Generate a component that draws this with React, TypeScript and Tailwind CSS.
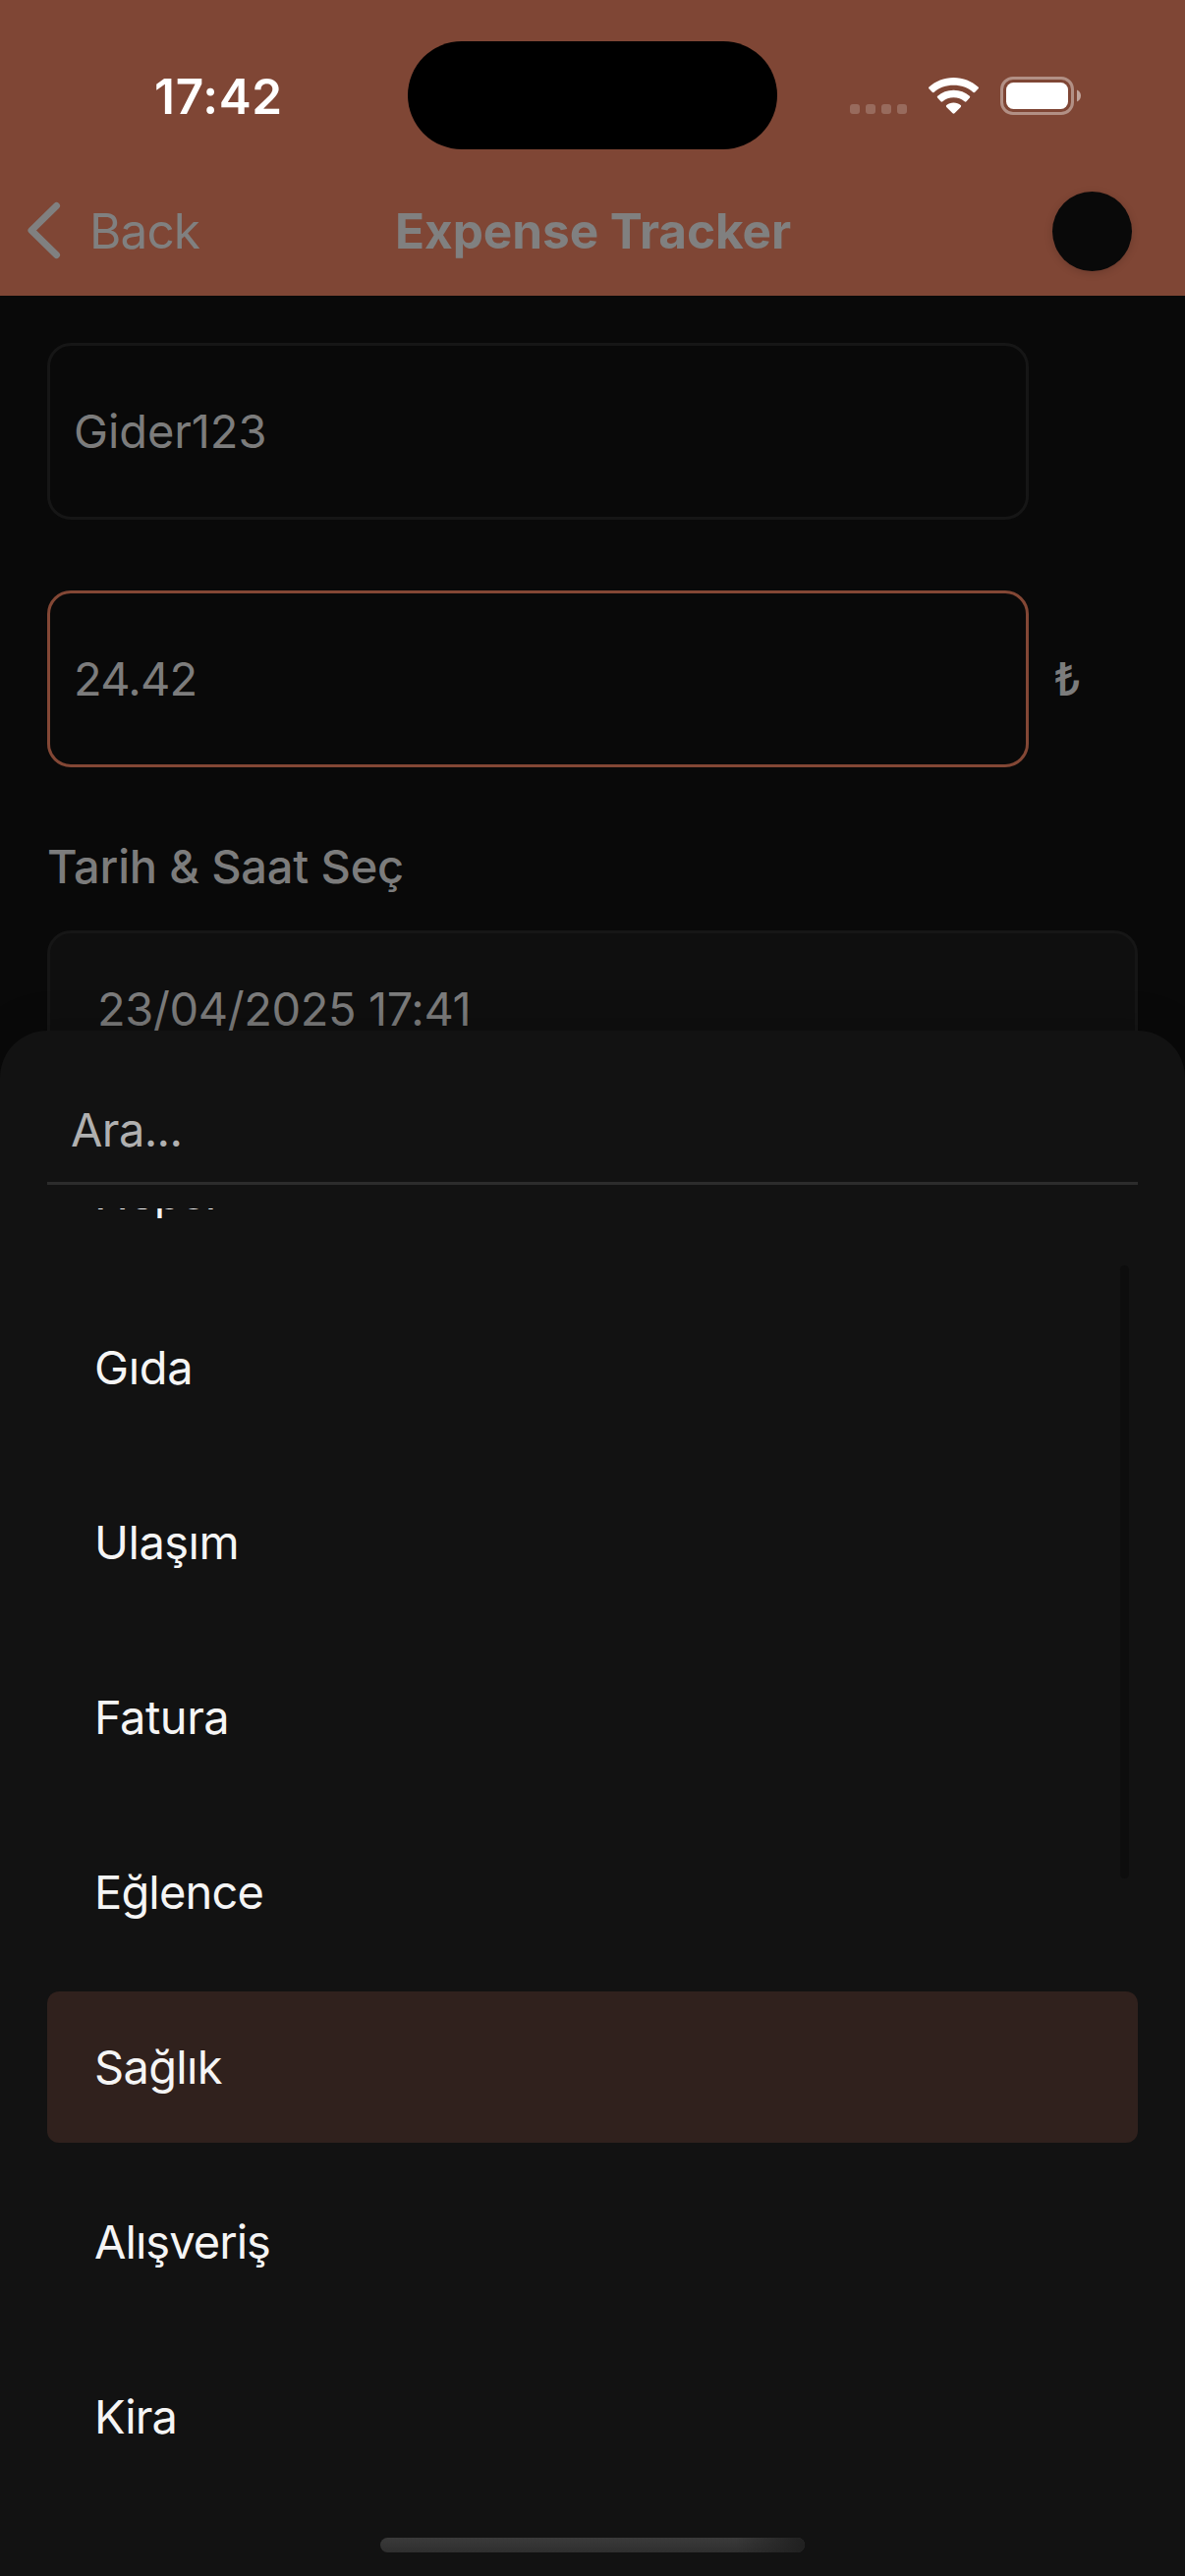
const categories = [
  { name: "Hepsi", tracking: "tracking-[-0.8px]" },
  { name: "Gıda", tracking: "tracking-[-0.3px]" },
  { name: "Ulaşım", tracking: "tracking-[-0.49px]" },
  { name: "Fatura", tracking: "tracking-[-0.5px]" },
  { name: "Eğlence", tracking: "tracking-[-0.85px]" },
  { name: "Sağlık", tracking: "tracking-[-0.7px]" },
  { name: "Alışveriş", tracking: "tracking-[-0.95px]" },
  { name: "Kira", tracking: "tracking-[-1px]" },
];

const selected = "Sağlık";

function WifiIcon() {
  return (
    <svg className="ml-[22px] h-[38px] w-[51px]" viewBox="0 0 51 38" fill="white">
      <path d="M25.5 1C35.2 1 44 4.600 50.500 10.500c.6.6.6 1.200.1 1.800l-3.300 3.500c-.5.6-1.300.6-1.800.1C40.200 11.200 33.200 8.700 25.500 8.700S10.800 11.200 5.500 15.900c-.5.5-1.300.5-1.800-.1L.4 12.300c-.5-.6-.5-1.200.1-1.800C7 4.600 15.800 1 25.500 1Z" />
      <path d="M25.500 13.800c6.300 0 12 2.200 16.300 6 .6.5.6 1.200.1 1.800l-3.400 3.600c-.5.6-1.300.6-1.900.1-3-2.500-6.800-4-11.100-4s-8.100 1.500-11.100 4c-.6.5-1.400.5-1.900-.1l-3.400-3.600c-.5-.6-.5-1.300.1-1.800 4.300-3.800 10-6 16.300-6Z" />
      <path d="M25.500 26.600c2.900 0 5.300.9 7.200 2.500.6.5.6 1.200.1 1.800l-6.300 6.400c-.6.6-1.400.6-2 0l-6.300-6.400c-.5-.6-.5-1.300.1-1.800 1.900-1.600 4.300-2.500 7.200-2.500Z" />
    </svg>
  );
}

function StatusBar() {
  return (
    <div className="flex h-[180px] items-start">
      <div className="w-[415px] pt-[68px] pl-[157px] text-[49.5px] leading-[60px] font-semibold tracking-[0.7px] text-white">
        17:42
      </div>
      <div className="mt-[42px] h-[110px] w-[376px] rounded-[55px] bg-black" />
      <div className="mt-[78px] ml-[74px] flex">
        <div className="mt-[28px] flex gap-[6px]">
          <div className="size-[10px] rounded-[3px] bg-white/20" />
          <div className="size-[10px] rounded-[3px] bg-white/20" />
          <div className="size-[10px] rounded-[3px] bg-white/20" />
          <div className="size-[10px] rounded-[3px] bg-white/20" />
        </div>
        <WifiIcon />
        <svg className="ml-[22px] h-[39px] w-[82px]" viewBox="0 0 82 39">
          <rect x="1.500" y="1.500" width="72" height="36" rx="11.500" fill="none" stroke="white" strokeOpacity="0.4" strokeWidth="3" />
          <rect x="6" y="6" width="63" height="27" rx="7.500" fill="white" />
          <path d="M78 13.500c2.400 1 4 3.200 4 6s-1.600 5-4 6Z" fill="white" fillOpacity="0.5" />
        </svg>
      </div>
    </div>
  );
}

function Header() {
  return (
    <header className="h-[301px] bg-[#7f4635]">
      <StatusBar />
      <div className="flex h-[110px] items-center text-[49.5px] leading-[60px] text-[#808080]">
        <svg className="ml-[27px] h-[60px] w-[36px]" viewBox="0 0 36 60" fill="none">
          <path d="M30.500 4.500 5 29.500l25.500 25" stroke="#808080" strokeWidth="7" strokeLinecap="round" strokeLinejoin="round" />
        </svg>
        <div className="ml-[28px] w-[311px] tracking-[-0.9px]">Back</div>
        <h1 className="w-[669px] font-bold tracking-[-0.06px] whitespace-nowrap">Expense Tracker</h1>
        <div className="size-[81px] rounded-full bg-[#090909] shadow-[0_2px_8px_rgba(0,0,0,0.16)]" />
      </div>
    </header>
  );
}

export default function App() {
  return (
    <div className="relative h-[2622px] w-[1206px] overflow-hidden bg-[#090909] font-[Inter,sans-serif]">
      <Header />

      <main className="px-12 pt-12 text-[47px] leading-[58px] text-[#7c7c7c]">
        <div className="flex h-[180px] w-[999px] items-center rounded-[24px] border-[3px] border-[#161616] pl-[24px] tracking-[-0.1px]">
          Gider123
        </div>
        <div className="mt-[72px] flex items-center">
          <div className="flex h-[180px] w-[999px] items-center rounded-[24px] border-[3px] border-[#834735] pl-[24px] tracking-[-0.78px]">
            24.42
          </div>
          <div className="ml-[25px] font-medium">₺</div>
        </div>
        <div className="mt-[72px] font-medium tracking-[-0.18px]">Tarih &amp; Saat Seç</div>
        <div className="mt-[36px] flex h-[180px] rounded-[24px] border-[3px] border-[#161616] bg-[#0f0f0f] pt-[48px] pl-[48px] tracking-[-0.4px]">
          23/04/2025 17:41
        </div>
      </main>

      {/* Category picker sheet */}
      <section className="absolute inset-x-0 top-[1049px] bottom-0 rounded-t-[48px] bg-[#121212] px-12 text-[47px] leading-[58px] shadow-[0_-6px_36px_rgba(0,0,0,0.2)]">
        <div className="flex h-[157px] items-end border-b-[3px] border-[#2c2c2c] pb-[24px] pl-[24px] tracking-[-0.62px] text-[#b0b0b0]">
          Ara...
        </div>
        <div className="mt-[24px] h-[1392px] overflow-hidden text-[#f5f5f5]">
          <ul className="mt-[-93px] flex flex-col gap-6">
            {categories.map((c) => (
              <li
                key={c.name}
                className={`flex h-[154px] shrink-0 items-center rounded-[12px] pl-[48px] ${c.tracking} ${
                  c.name === selected ? "bg-[#30211d]" : ""
                }`}
              >
                {c.name}
              </li>
            ))}
          </ul>
        </div>
        <div className="absolute top-[239px] right-[57px] h-[624px] w-[9px] rounded-full bg-[#0d0d0d]" />
        <div className="absolute bottom-[24px] left-[387px] h-[15px] w-[432px] overflow-hidden rounded-full bg-linear-to-b from-[#3a3a3a] to-[#2f2f2f]">
          <div className="ml-auto h-full w-[70px] bg-linear-to-r from-transparent to-[#202020]" />
        </div>
      </section>
    </div>
  );
}
